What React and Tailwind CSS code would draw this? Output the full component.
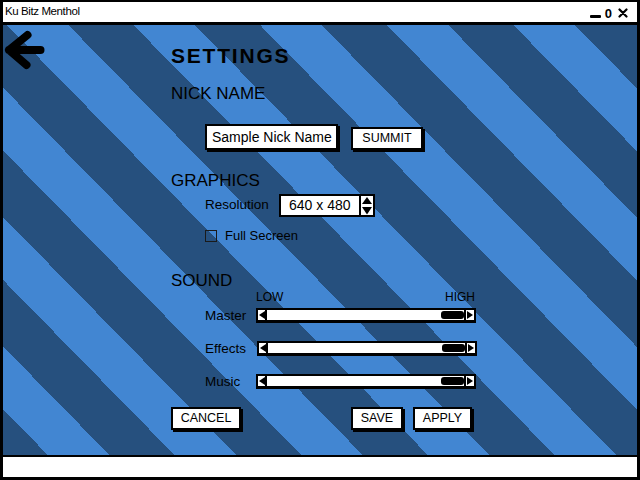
import React from "react";

const Tri = ({ right = false }) => (
  <svg width="6" height="8" viewBox="0 0 6 8">
    <polygon points={right ? "0,0 6,4 0,8" : "6,0 0,4 6,8"} fill="black" />
  </svg>
);

const Slider = ({ shift = "" }) => (
  <div className={`w-[220px] h-[15px] flex border-2 border-b-[3px] border-black bg-white ${shift}`}>
    <div className="w-[9px] flex items-center justify-center border-r-2 border-black">
      <Tri />
    </div>
    <div className="flex-1 flex items-center justify-end">
      <div className="w-[23px] h-[8px] rounded-[3px] bg-black" />
    </div>
    <div className="w-[10px] flex items-center justify-center border-l-2 border-black">
      <Tri right />
    </div>
  </div>
);

const Button = ({ children, className = "" }) => (
  <div
    className={`h-[23px] flex items-center justify-center bg-white border-2 border-black shadow-[2px_2px_0_#000] text-[12.5px] ${className}`}
  >
    {children}
  </div>
);

const SliderRow = ({ label, shift }) => (
  <div className="flex items-center h-[15px]">
    <div className="w-[51px] text-[13.5px] leading-[15px]">{label}</div>
    <Slider shift={shift} />
  </div>
);

export default function App() {
  return (
    <div className="w-[640px] h-[480px] bg-black flex flex-col px-[3px] pt-[2px] pb-[3px] font-['Liberation_Sans',sans-serif] text-black">
      {/* title bar */}
      <div className="h-[20px] bg-white flex items-center justify-between pl-[2px] pr-[9px]">
        <span className="text-[11.5px] tracking-[-0.4px]">Ku Bitz Menthol</span>
        <div className="flex items-center gap-[4px] mt-[2px]">
          <div className="w-[11px] h-[3px] mt-[7px] rounded-[1px] bg-black" />
          <span className="text-[13px] font-bold leading-none">0</span>
          <svg width="10" height="10" viewBox="0 0 10 10" className="ml-[2px]">
            <path d="M1.5 1.5 L8.5 8.5 M8.5 1.5 L1.5 8.5" stroke="black" strokeWidth="2.2" strokeLinecap="round" />
          </svg>
        </div>
      </div>

      {/* content */}
      <div className="mt-[3px] h-[430px] flex bg-[repeating-linear-gradient(45.6deg,#26507e_0px,#26507e_32px,#4286d2_32px,#4286d2_76px,#26507e_76px,#26507e_90.5px)]">
        <svg width="44" height="44" viewBox="0 0 44 44" className="mt-[3px] shrink-0">
          <path
            d="M24.5 7 L6 22 L23.5 37 M6 22 L37.5 22"
            fill="none"
            stroke="black"
            strokeWidth="8"
            strokeLinecap="round"
            strokeLinejoin="round"
          />
        </svg>

        <div className="ml-[124px] pt-[19px] flex flex-col">
          <div className="h-[24px] leading-[24px] text-[21px] font-bold tracking-[1.8px]">SETTINGS</div>
          <div className="mt-[16px] h-[20px] leading-[20px] text-[17px]">NICK NAME</div>

          <div className="mt-[20px] ml-[34px] h-[26px] flex items-end">
            <div className="w-[133px] h-[26px] flex items-center pl-[5px] bg-white border-2 border-black shadow-[2px_2px_0_#000] text-[14px]">
              Sample Nick Name
            </div>
            <Button className="ml-[13px] w-[72px]">SUMMIT</Button>
          </div>

          <div className="mt-[21px] h-[20px] leading-[20px] text-[17px]">GRAPHICS</div>

          <div className="mt-[3px] ml-[34px] h-[23px] flex items-center">
            <div className="w-[74px] text-[13.5px]">Resolution</div>
            <div className="w-[96px] h-[23px] flex bg-white border-2 border-black">
              <div className="flex-1 flex items-center pl-[8px] text-[14px]">640 x 480</div>
              <div className="w-[14px] flex items-center justify-center border-l-2 border-black">
                <svg width="10" height="18" viewBox="0 0 10 18">
                  <polygon points="5,0 10,7 0,7" fill="black" />
                  <polygon points="0,10 10,10 5,17.5" fill="black" />
                </svg>
              </div>
            </div>
          </div>

          <div className="mt-[13px] ml-[34px] h-[12px] flex items-center">
            <div className="w-[12px] h-[12px] border-[1.5px] border-[#1a1a1a]" />
            <span className="ml-[8px] text-[13px] leading-[12px]">Full Secreen</span>
          </div>

          <div className="mt-[29px] h-[20px] leading-[20px] text-[17px]">SOUND</div>

          <div className="ml-[34px] flex flex-col">
            <div className="h-[12px] pl-[51px] w-[270px] flex justify-between text-[12px] leading-[12px]">
              <span>LOW</span>
              <span>HIGH</span>
            </div>
            <div className="mt-[5px] flex flex-col gap-[18px]">
              <SliderRow label="Master" />
              <SliderRow label="Effects" shift="ml-[1px]" />
              <SliderRow label="Music" />
            </div>
          </div>

          <div className="mt-[18px] flex">
            <Button className="w-[70px]">CANCEL</Button>
            <Button className="ml-[110px] w-[52px]">SAVE</Button>
            <Button className="ml-[10px] w-[59px]">APPLY</Button>
          </div>
        </div>
      </div>

      {/* status bar */}
      <div className="mt-[2px] h-[20px] bg-white" />
    </div>
  );
}
